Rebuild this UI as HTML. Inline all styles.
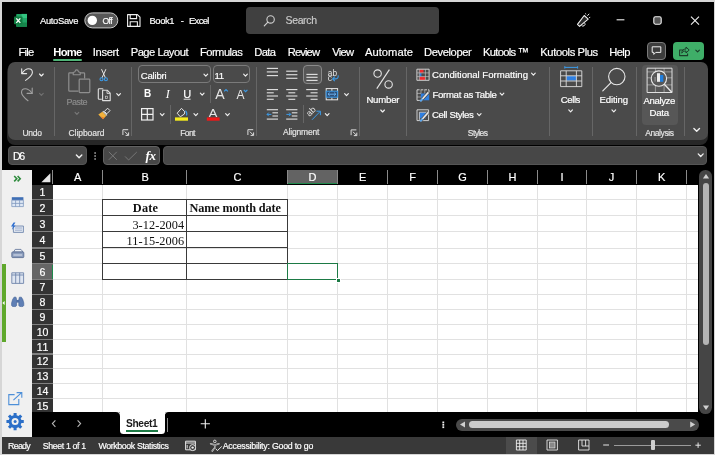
<!DOCTYPE html>
<html lang="en"><head><meta charset="utf-8"><title>Book1 - Excel</title>
<style>
html,body{margin:0;padding:0;}
body{width:715px;height:455px;overflow:hidden;background:#d6d6d6;position:relative;font-family:"Liberation Sans",sans-serif;}
#app{position:absolute;left:0;top:0;width:715px;height:455px;overflow:hidden;}
#app div{position:absolute;}
#app span{position:absolute;white-space:pre;line-height:1;-webkit-text-stroke:0.18px currentColor;}
#txt{position:absolute;left:0;top:0;width:715px;height:455px;will-change:transform;transform:translateZ(0);}
#app svg{position:absolute;left:0;top:0;will-change:transform;transform:translateZ(0);}
</style></head><body>
<div id="app">
<div style="left:2px;top:2px;width:711.9px;height:451.6px;background:#000;"></div>
<div style="left:246.3px;top:7.2px;width:193px;height:26.4px;background:#404040;border-radius:4px;"></div>
<div style="left:7.4px;top:64px;width:700.7px;height:80.8px;background:#272727;border-radius:8px;"></div>
<div style="left:8px;top:62px;width:699.5px;height:78.4px;background:#4a4a4a;border-radius:7px;"></div>
<div style="left:641.6px;top:65.3px;width:36px;height:59.3px;background:#575757;border-radius:4px;"></div>
<div style="left:138.3px;top:65.4px;width:72.3px;height:18.1px;background:transparent;border:1px solid #7a7a7a;border-radius:4px;box-sizing:border-box;"></div>
<div style="left:212.5px;top:65.4px;width:37.5px;height:18.1px;background:transparent;border:1px solid #7a7a7a;border-radius:4px;box-sizing:border-box;"></div>
<div style="left:302.8px;top:65.4px;width:18.8px;height:18.4px;background:#565656;border:1px solid #8a8a8a;border-radius:4px;box-sizing:border-box;"></div>
<div style="left:53.9px;top:67px;width:1px;height:68.5px;background:#666;"></div>
<div style="left:131px;top:67px;width:1px;height:68.5px;background:#666;"></div>
<div style="left:256px;top:67px;width:1px;height:68.5px;background:#666;"></div>
<div style="left:359.1px;top:67px;width:1px;height:68.5px;background:#666;"></div>
<div style="left:406.2px;top:67px;width:1px;height:68.5px;background:#666;"></div>
<div style="left:549.1px;top:67px;width:1px;height:68.5px;background:#666;"></div>
<div style="left:592.1px;top:67px;width:1px;height:68.5px;background:#666;"></div>
<div style="left:635.5px;top:67px;width:1px;height:68.5px;background:#666;"></div>
<div style="left:683.5px;top:67px;width:1px;height:68.5px;background:#666;"></div>
<div style="left:210.1px;top:85.4px;width:1px;height:17.6px;background:#666;"></div>
<div style="left:169.9px;top:105px;width:1px;height:18.6px;background:#666;"></div>
<div style="left:302.5px;top:105.4px;width:1px;height:17.9px;background:#666;"></div>
<div style="left:646.6px;top:41.5px;width:19.7px;height:18.8px;background:#3d3d3d;border:1px solid #7a7a7a;border-radius:4px;box-sizing:border-box;"></div>
<div style="left:673px;top:41.5px;width:31.3px;height:18.8px;background:#3fae68;border-radius:4px;"></div>
<div style="left:53.2px;top:59px;width:29px;height:2px;background:#4fb477;border-radius:1px;"></div>
<div style="left:8px;top:146.2px;width:79px;height:18.6px;background:#474747;border:1px solid #555;border-radius:4px;box-sizing:border-box;"></div>
<div style="left:103px;top:146.2px;width:57px;height:18.6px;background:#474747;border:1px solid #626262;border-radius:4px;box-sizing:border-box;"></div>
<div style="left:163.2px;top:146.2px;width:544.3px;height:18.6px;background:#474747;border:1px solid #555;border-radius:4px;box-sizing:border-box;"></div>
<div style="left:2px;top:170px;width:29.6px;height:267px;background:#f0f0f0;"></div>
<div style="left:2px;top:263.6px;width:3.6px;height:78px;background:#5fa82c;"></div>
<div style="left:53px;top:185px;width:645.4px;height:227.4px;background:#fff;"></div>
<div style="left:32.4px;top:185px;width:20.2px;height:227.4px;background:#808080;"></div>
<div style="left:32.4px;top:185.2px;width:20.2px;height:13.8px;background:#333;"></div>
<div style="left:32.4px;top:200px;width:20.2px;height:15.2px;background:#333;"></div>
<div style="left:32.4px;top:216.2px;width:20.2px;height:15px;background:#333;"></div>
<div style="left:32.4px;top:232.2px;width:20.2px;height:15.3px;background:#333;"></div>
<div style="left:32.4px;top:248.5px;width:20.2px;height:14.8px;background:#333;"></div>
<div style="left:32.4px;top:264.3px;width:20.2px;height:14.7px;background:#666;"></div>
<div style="left:32.4px;top:280px;width:20.2px;height:13.9px;background:#333;"></div>
<div style="left:32.4px;top:294.9px;width:20.2px;height:13.9px;background:#333;"></div>
<div style="left:32.4px;top:309.8px;width:20.2px;height:13.9px;background:#333;"></div>
<div style="left:32.4px;top:324.7px;width:20.2px;height:13.9px;background:#333;"></div>
<div style="left:32.4px;top:339.6px;width:20.2px;height:13.9px;background:#333;"></div>
<div style="left:32.4px;top:354.5px;width:20.2px;height:13.9px;background:#333;"></div>
<div style="left:32.4px;top:369.4px;width:20.2px;height:13.9px;background:#333;"></div>
<div style="left:32.4px;top:384.3px;width:20.2px;height:13.9px;background:#333;"></div>
<div style="left:32.4px;top:399.2px;width:20.2px;height:13.2px;background:#333;"></div>
<div style="left:51.6px;top:264.6px;width:1.2px;height:14.4px;background:#1f8a4c;"></div>
<div style="left:287.4px;top:170.1px;width:50.2px;height:13.6px;background:#636363;"></div>
<div style="left:287.4px;top:183.3px;width:50.2px;height:1.2px;background:#1f8a4c;"></div>
<div style="left:52px;top:170.3px;width:1px;height:14px;background:#8a8a8a;"></div>
<div style="left:102px;top:170.3px;width:1px;height:14px;background:#8a8a8a;"></div>
<div style="left:186.3px;top:170.3px;width:1px;height:14px;background:#8a8a8a;"></div>
<div style="left:286.7px;top:170.3px;width:1px;height:14px;background:#8a8a8a;"></div>
<div style="left:336.7px;top:170.3px;width:1px;height:14px;background:#8a8a8a;"></div>
<div style="left:386.5px;top:170.3px;width:1px;height:14px;background:#8a8a8a;"></div>
<div style="left:436.5px;top:170.3px;width:1px;height:14px;background:#8a8a8a;"></div>
<div style="left:486.5px;top:170.3px;width:1px;height:14px;background:#8a8a8a;"></div>
<div style="left:536.5px;top:170.3px;width:1px;height:14px;background:#8a8a8a;"></div>
<div style="left:585.8px;top:170.3px;width:1px;height:14px;background:#8a8a8a;"></div>
<div style="left:635.7px;top:170.3px;width:1px;height:14px;background:#8a8a8a;"></div>
<div style="left:685.5px;top:170.3px;width:1px;height:14px;background:#8a8a8a;"></div>
<div style="left:102px;top:185px;width:1px;height:227.2px;background:#e1e1e1;"></div>
<div style="left:186.3px;top:185px;width:1px;height:227.2px;background:#e1e1e1;"></div>
<div style="left:286.7px;top:185px;width:1px;height:227.2px;background:#e1e1e1;"></div>
<div style="left:336.7px;top:185px;width:1px;height:227.2px;background:#e1e1e1;"></div>
<div style="left:386.5px;top:185px;width:1px;height:227.2px;background:#e1e1e1;"></div>
<div style="left:436.5px;top:185px;width:1px;height:227.2px;background:#e1e1e1;"></div>
<div style="left:486.5px;top:185px;width:1px;height:227.2px;background:#e1e1e1;"></div>
<div style="left:536.5px;top:185px;width:1px;height:227.2px;background:#e1e1e1;"></div>
<div style="left:585.8px;top:185px;width:1px;height:227.2px;background:#e1e1e1;"></div>
<div style="left:635.7px;top:185px;width:1px;height:227.2px;background:#e1e1e1;"></div>
<div style="left:685.5px;top:185px;width:1px;height:227.2px;background:#e1e1e1;"></div>
<div style="left:53px;top:199px;width:645.4px;height:1px;background:#e1e1e1;"></div>
<div style="left:53px;top:215.2px;width:645.4px;height:1px;background:#e1e1e1;"></div>
<div style="left:53px;top:231.2px;width:645.4px;height:1px;background:#e1e1e1;"></div>
<div style="left:53px;top:247.5px;width:645.4px;height:1px;background:#e1e1e1;"></div>
<div style="left:53px;top:263.3px;width:645.4px;height:1px;background:#e1e1e1;"></div>
<div style="left:53px;top:279px;width:645.4px;height:1px;background:#e1e1e1;"></div>
<div style="left:53px;top:293.9px;width:645.4px;height:1px;background:#e1e1e1;"></div>
<div style="left:53px;top:308.8px;width:645.4px;height:1px;background:#e1e1e1;"></div>
<div style="left:53px;top:323.7px;width:645.4px;height:1px;background:#e1e1e1;"></div>
<div style="left:53px;top:338.6px;width:645.4px;height:1px;background:#e1e1e1;"></div>
<div style="left:53px;top:353.5px;width:645.4px;height:1px;background:#e1e1e1;"></div>
<div style="left:53px;top:368.4px;width:645.4px;height:1px;background:#e1e1e1;"></div>
<div style="left:53px;top:383.3px;width:645.4px;height:1px;background:#e1e1e1;"></div>
<div style="left:53px;top:398.2px;width:645.4px;height:1px;background:#e1e1e1;"></div>
<div style="left:102px;top:199.3px;width:185.8px;height:1px;background:#3a3a3a;"></div>
<div style="left:102px;top:215.1px;width:185.8px;height:1px;background:#3a3a3a;"></div>
<div style="left:102px;top:231.1px;width:185.8px;height:1px;background:#3a3a3a;"></div>
<div style="left:102px;top:247.3px;width:185.8px;height:1px;background:#3a3a3a;"></div>
<div style="left:102px;top:263.2px;width:185.8px;height:1px;background:#3a3a3a;"></div>
<div style="left:102px;top:278.9px;width:185.8px;height:1px;background:#3a3a3a;"></div>
<div style="left:101.8px;top:199.3px;width:1px;height:80.6px;background:#3a3a3a;"></div>
<div style="left:186.3px;top:199.3px;width:1px;height:80.6px;background:#3a3a3a;"></div>
<div style="left:286.8px;top:199.3px;width:1px;height:80.6px;background:#3a3a3a;"></div>
<div style="left:286.6px;top:263px;width:51.6px;height:17px;background:transparent;border:1.9px solid #1d7a45;box-sizing:border-box;"></div>
<div style="left:335.8px;top:277.8px;width:3.4px;height:3.4px;background:#1d7a45;border:0.6px solid #fff;"></div>
<div style="left:699.4px;top:170.2px;width:12.8px;height:243.8px;background:#454545;border-radius:6.4px;"></div>
<div style="left:702.8px;top:183px;width:6.2px;height:162.3px;background:#b4b4b4;border-radius:3.1px;"></div>
<div style="left:455.9px;top:418.6px;width:243.6px;height:12px;background:#4a4a4a;border-radius:6px;"></div>
<div style="left:468.7px;top:420.9px;width:200.2px;height:6.9px;background:#cbcbcb;border-radius:3.5px;"></div>
<div style="left:2px;top:437px;width:711.9px;height:16.6px;background:#393939;"></div>
<div style="left:506px;top:437px;width:30.8px;height:16.6px;background:#4b4b4b;"></div>
<div style="left:119.8px;top:411.5px;width:45px;height:22.1px;background:#fff;border-radius:0 0 3.5px 3.5px;"></div>
<div style="left:126px;top:430.2px;width:31.9px;height:1.6px;background:#1d7a45;"></div>
<div style="left:166.9px;top:417.6px;width:1px;height:14px;background:#8a8a8a;"></div>
<div style="left:613.7px;top:444.6px;width:77.4px;height:1px;background:#9a9a9a;"></div>
<div style="left:651.2px;top:440.4px;width:3.6px;height:9.8px;background:#cfcfcf;border-radius:1px;"></div>
<svg width="715" height="455" viewBox="0 0 715 455">
<rect x="16.2" y="13.9" width="10.8" height="12.8" rx="0.8" fill="#1fa463"/>
<rect x="21.6" y="13.9" width="5.4" height="4.4" fill="#33c481"/>
<rect x="21.6" y="18.3" width="5.4" height="4.2" fill="#21a366"/>
<rect x="16.2" y="22.5" width="10.8" height="4.2" fill="#16864c"/>
<rect x="14" y="16.4" width="8.5" height="7.9" rx="0.8" fill="#107c41"/>
<path d="M16.3 18.4 L20.3 22.9 M20.3 18.4 L16.3 22.9" stroke="#fff" stroke-width="1.4"/>
<rect x="84.8" y="12.9" width="33" height="15" rx="7.5" fill="#575757" stroke="#c8c8c8" stroke-width="1"/>
<circle cx="92.3" cy="20.4" r="4.7" fill="#fff"/>
<path d="M127.6 14.6 H137.4 L140 17.2 V26.4 H127.6 Z" fill="none" stroke="#f0f0f0" stroke-width="1.1" stroke-linejoin="round"/>
<path d="M130.2 14.6 V18.6 H136.6 V14.6 M130.2 26.4 V21.8 H137.4 V26.4" fill="none" stroke="#f0f0f0" stroke-width="1.1"/>
<circle cx="270.6" cy="19.4" r="3.7" fill="none" stroke="#d0d0d0" stroke-width="1.1"/>
<path d="M267.9 22.1 L264.3 25.8" stroke="#d0d0d0" stroke-width="1.2" stroke-linecap="round"/>
<path d="M577.5 24.3 L584.2 15.5 L588.2 19.2 L579.6 26.4 Z" fill="#2a2a2a" stroke="#f0f0f0" stroke-width="1.1" stroke-linejoin="round"/>
<path d="M581.4 25 A1.7 1.7 0 0 0 584.8 23.2" fill="none" stroke="#f0f0f0" stroke-width="1"/>
<path d="M587.4 15.8 L589.2 13.8 M585.9 14.4 L585.5 13.4 M589.2 17.6 L590.2 17.3" fill="none" stroke="#f0f0f0" stroke-width="1"/>
<path d="M616.6 19.8 H624.4" stroke="#f0f0f0" stroke-width="1.1"/>
<rect x="653.8" y="16.8" width="7.4" height="7.4" rx="1.6" fill="#555" stroke="#f0f0f0" stroke-width="1.1"/>
<path d="M691 16.7 L699 24.7 M699 16.7 L691 24.7" stroke="#f0f0f0" stroke-width="1.1"/>
<path d="M652.2 46.8 H660.8 V52.4 H655.8 L653.8 54.4 V52.4 H652.2 Z" fill="none" stroke="#f0f0f0" stroke-width="1" stroke-linejoin="round"/>
<path d="M683.4 50 H679.6 V55.6 H687.6 V53.4" fill="none" stroke="#1c3d2a" stroke-width="1.1" stroke-linejoin="round"/>
<path d="M681.8 53.2 C681.8 50.4 683.4 49 686 49 V47 L689.2 50 L686 53 V51 C684 51 682.8 51.6 681.8 53.2 Z" fill="none" stroke="#1c3d2a" stroke-width="1" stroke-linejoin="round"/>
<path d="M695.8 50.05 L697.6 51.95 L699.4 50.05" fill="none" stroke="#1c3d2a" stroke-width="1.1" stroke-linecap="round" stroke-linejoin="round"/>
<path d="M21.7 68.8 V73.6 H26.6" fill="none" stroke="#e6e6e6" stroke-width="1.1" stroke-linejoin="round" stroke-linecap="round"/>
<path d="M21.9 73.4 C24 70.5 26 68.7 28.5 68.7 C31 68.7 32.4 70.4 32.4 72.4 C32.4 75.2 29.5 77.5 25.6 80.4" fill="none" stroke="#e6e6e6" stroke-width="1.1" stroke-linecap="round"/>
<path d="M39.55 74 L41.4 76 L43.25 74" fill="none" stroke="#f0f0f0" stroke-width="1.15" stroke-linecap="round" stroke-linejoin="round"/>
<path d="M32.2 88.1 V93.4 H27.1" fill="none" stroke="#a0a0a0" stroke-width="1.1" stroke-linejoin="round" stroke-linecap="round"/>
<path d="M32 93.2 C30 90.4 27.8 88.8 25.2 88.8 C22.8 88.8 21.5 90.5 21.5 92.5 C21.5 95.4 24.3 97.8 28 100.7" fill="none" stroke="#a0a0a0" stroke-width="1.1" stroke-linecap="round"/>
<path d="M39.55 93.4 L41.4 95.4 L43.25 93.4" fill="none" stroke="#707070" stroke-width="1.15" stroke-linecap="round" stroke-linejoin="round"/>
<path d="M73.4 72.8 H69.6 Q68.8 72.8 68.8 73.6 V90.4 Q68.8 91.2 69.6 91.2 H78.4" fill="none" stroke="#8f8f8f" stroke-width="1.2" stroke-linejoin="round"/>
<path d="M80 72.8 H83.8 Q84.6 72.8 84.6 73.6 V78.6" fill="none" stroke="#8f8f8f" stroke-width="1.2" stroke-linejoin="round"/>
<path d="M73.2 74.8 V72.4 L75 71.8 C75.2 69.2 78.2 69.2 78.4 71.8 L80.2 72.4 V74.8 Z" fill="none" stroke="#8f8f8f" stroke-width="1.1" stroke-linejoin="round"/>
<rect x="79.2" y="79.2" width="10.6" height="13.4" rx="0.8" fill="#4a4a4a" stroke="#8f8f8f" stroke-width="1.2"/>
<path d="M75.05 112.4 L76.9 114.4 L78.75 112.4" fill="none" stroke="#777" stroke-width="1.15" stroke-linecap="round" stroke-linejoin="round"/>
<path d="M101.5 69.2 L105.4 77.8 M105.9 69.2 L102 77.8" stroke="#e6e6e6" stroke-width="1"/>
<circle cx="101.5" cy="79.3" r="1.5" fill="none" stroke="#3b9be8" stroke-width="1.1"/>
<circle cx="105.9" cy="79.3" r="1.5" fill="none" stroke="#3b9be8" stroke-width="1.1"/>
<path d="M101.8 99.2 H99.1 Q98.3 99.2 98.3 98.4 V89.6 Q98.3 88.8 99.1 88.8 H102.2 Q103 88.8 103 89.6" fill="none" stroke="#e0e0e0" stroke-width="1.1" stroke-linejoin="round"/>
<path d="M102.6 90.2 H107.2 L110.2 93.2 V100.6 H102.6 Z" fill="#4a4a4a" stroke="#e0e0e0" stroke-width="1.1" stroke-linejoin="round"/>
<path d="M107 90.4 V93.4 H110" fill="none" stroke="#e0e0e0" stroke-width="0.9"/>
<rect x="105.4" y="96.2" width="2.2" height="2.2" fill="none" stroke="#c8c8c8" stroke-width="0.7"/>
<path d="M116.75 93.7 L118.6 95.7 L120.45 93.7" fill="none" stroke="#f0f0f0" stroke-width="1.15" stroke-linecap="round" stroke-linejoin="round"/>
<path d="M107.6 108.2 L110 110.6 L106.8 113.8 L104.4 111.4 Z" fill="none" stroke="#e6e6e6" stroke-width="1" stroke-linejoin="round"/>
<path d="M102.8 111.2 L107 115.4" stroke="#e6e6e6" stroke-width="1.1"/>
<path d="M102.4 111.8 L98.3 114.6 L103 119.3 L106.3 115.7 Z" fill="#f2b23c"/>
<path d="M100.6 116.6 L103 119.3 L104.4 117.8 Z" fill="#e8762c"/>
<path d="M128.2 129.7 H122.9 V135" fill="none" stroke="#dcdcdc" stroke-width="1"/>
<path d="M124.8 131.6 L128.4 135.2 M128.6 132.4 V135.4 H125.6" fill="none" stroke="#dcdcdc" stroke-width="1"/>
<path d="M203.95 74.2 L205.8 76.2 L207.65 74.2" fill="none" stroke="#f0f0f0" stroke-width="1.15" stroke-linecap="round" stroke-linejoin="round"/>
<path d="M243.65 74.2 L245.5 76.2 L247.35 74.2" fill="none" stroke="#f0f0f0" stroke-width="1.15" stroke-linecap="round" stroke-linejoin="round"/>
<path d="M183.7 99.2 H190.6" stroke="#e6e6e6" stroke-width="1"/>
<path d="M200.35 93.2 L202.2 95.2 L204.05 93.2" fill="none" stroke="#f0f0f0" stroke-width="1.15" stroke-linecap="round" stroke-linejoin="round"/>
<text x="215.2" y="98.6" font-family="Liberation Sans, sans-serif" font-size="14" fill="#e6e6e6" textLength="9.4" lengthAdjust="spacingAndGlyphs">A</text>
<path d="M224.2 91.4 L226 89.6 L227.8 91.4" fill="none" stroke="#3b9be8" stroke-width="1.2"/>
<text x="236.6" y="98.6" font-family="Liberation Sans, sans-serif" font-size="12" fill="#e6e6e6" textLength="8" lengthAdjust="spacingAndGlyphs">A</text>
<path d="M243.8 89.8 L245.6 91.6 L247.4 89.8" fill="none" stroke="#3b9be8" stroke-width="1.2"/>
<rect x="141.6" y="108.6" width="11.4" height="11.4" fill="none" stroke="#f0f0f0" stroke-width="1.2"/>
<path d="M147.3 108.6 V120 M141.6 114.3 H153" stroke="#f0f0f0" stroke-width="1.2"/>
<path d="M160.35 113.6 L162.2 115.6 L164.05 113.6" fill="none" stroke="#f0f0f0" stroke-width="1.15" stroke-linecap="round" stroke-linejoin="round"/>
<path d="M181.5 108.3 L184.8 111.8 L184.3 114.1 L180.3 116.8 L177.2 113.2 Z" fill="none" stroke="#e6e6e6" stroke-width="1" stroke-linejoin="round"/>
<path d="M185.4 110.6 C186.9 112 187.1 113.8 186.5 115.5" fill="none" stroke="#3b9be8" stroke-width="1.1"/>
<rect x="175" y="117.4" width="13" height="3.3" fill="#f5ec1c"/>
<path d="M193.95 113.6 L195.8 115.6 L197.65 113.6" fill="none" stroke="#f0f0f0" stroke-width="1.15" stroke-linecap="round" stroke-linejoin="round"/>
<text x="208.8" y="116.6" font-family="Liberation Sans, sans-serif" font-size="11.6" fill="#e6e6e6" textLength="8.6" lengthAdjust="spacingAndGlyphs">A</text>
<rect x="206.8" y="117.4" width="12.8" height="3.3" fill="#f01818"/>
<path d="M225.65 113.6 L227.5 115.6 L229.35 113.6" fill="none" stroke="#f0f0f0" stroke-width="1.15" stroke-linecap="round" stroke-linejoin="round"/>
<path d="M253.2 129.7 H247.9 V135" fill="none" stroke="#dcdcdc" stroke-width="1"/>
<path d="M249.8 131.6 L253.4 135.2 M253.6 132.4 V135.4 H250.6" fill="none" stroke="#dcdcdc" stroke-width="1"/>
<path d="M266.8 68.4 H278" stroke="#dcdcdc" stroke-width="1.15"/>
<path d="M266.8 71.9 H278" stroke="#dcdcdc" stroke-width="1.15"/>
<path d="M266.8 75.6 H278" stroke="#dcdcdc" stroke-width="1.15"/>
<path d="M286.2 71.2 H297.4" stroke="#dcdcdc" stroke-width="1.15"/>
<path d="M286.2 74.7 H297.4" stroke="#dcdcdc" stroke-width="1.15"/>
<path d="M286.2 78.3 H297.4" stroke="#dcdcdc" stroke-width="1.15"/>
<path d="M306.4 74.4 H317.6" stroke="#dcdcdc" stroke-width="1.15"/>
<path d="M306.4 77.3 H317.6" stroke="#dcdcdc" stroke-width="1.15"/>
<path d="M306.4 80.4 H317.6" stroke="#dcdcdc" stroke-width="1.15"/>
<path d="M266.8 89.6 H278" stroke="#dcdcdc" stroke-width="1.15"/>
<path d="M266.8 92.8 H273.744" stroke="#dcdcdc" stroke-width="1.15"/>
<path d="M266.8 96 H278" stroke="#dcdcdc" stroke-width="1.15"/>
<path d="M266.8 99.3 H273.744" stroke="#dcdcdc" stroke-width="1.15"/>
<path d="M286.2 89.6 H297.4" stroke="#dcdcdc" stroke-width="1.15"/>
<path d="M288.328 92.8 H295.272" stroke="#dcdcdc" stroke-width="1.15"/>
<path d="M286.2 96 H297.4" stroke="#dcdcdc" stroke-width="1.15"/>
<path d="M288.328 99.3 H295.272" stroke="#dcdcdc" stroke-width="1.15"/>
<path d="M306.2 89.6 H317.6" stroke="#dcdcdc" stroke-width="1.15"/>
<path d="M310.532 92.8 H317.6" stroke="#dcdcdc" stroke-width="1.15"/>
<path d="M306.2 96 H317.6" stroke="#dcdcdc" stroke-width="1.15"/>
<path d="M310.532 99.3 H317.6" stroke="#dcdcdc" stroke-width="1.15"/>
<text x="327.8" y="76" font-family="Liberation Sans, sans-serif" font-size="8.6" fill="#e6e6e6" textLength="9.2" lengthAdjust="spacingAndGlyphs">ab</text>
<text x="327.8" y="81.2" font-family="Liberation Sans, sans-serif" font-size="8.6" fill="#e6e6e6">c</text>
<path d="M338.2 75.4 C338.6 78 337.2 78.9 335.2 78.9 H332.8 M334.8 76.7 L332.6 78.9 L334.8 81.1" fill="none" stroke="#3b9be8" stroke-width="1.1"/>
<rect x="326.2" y="88.6" width="11.4" height="11.2" fill="none" stroke="#e6e6e6" stroke-width="1"/>
<path d="M331.9 88.6 V91 M331.9 97.4 V99.8" stroke="#e6e6e6" stroke-width="1"/>
<rect x="326.2" y="91.2" width="11.4" height="6" fill="#2d4f78" stroke="#3b9be8" stroke-width="1"/>
<path d="M328 94.2 H335.8 M329.6 92.7 L328 94.2 L329.6 95.7 M334.2 92.7 L335.8 94.2 L334.2 95.7" fill="none" stroke="#6db6f5" stroke-width="0.9"/>
<path d="M344.65 93.6 L346.5 95.6 L348.35 93.6" fill="none" stroke="#f0f0f0" stroke-width="1.15" stroke-linecap="round" stroke-linejoin="round"/>
<path d="M266.8 109.7 H278" stroke="#dcdcdc" stroke-width="1.15"/>
<path d="M266.8 119.1 H278" stroke="#dcdcdc" stroke-width="1.15"/>
<path d="M272.4 112.8 H278" stroke="#dcdcdc" stroke-width="1.15"/>
<path d="M272.4 116 H278" stroke="#dcdcdc" stroke-width="1.15"/>
<path d="M267 114.4 H271.4 M268.8 112.6 L267 114.4 L268.8 116.2" fill="none" stroke="#3b9be8" stroke-width="1"/>
<path d="M286.2 109.7 H297.4" stroke="#dcdcdc" stroke-width="1.15"/>
<path d="M286.2 119.1 H297.4" stroke="#dcdcdc" stroke-width="1.15"/>
<path d="M291.8 112.8 H297.4" stroke="#dcdcdc" stroke-width="1.15"/>
<path d="M291.8 116 H297.4" stroke="#dcdcdc" stroke-width="1.15"/>
<path d="M286.4 114.4 H290.8 M289 112.6 L290.8 114.4 L289 116.2" fill="none" stroke="#3b9be8" stroke-width="1"/>
<text transform="translate(309.6,117) rotate(-45)" font-family="Liberation Sans, sans-serif" font-size="8.8" fill="#e6e6e6">ab</text>
<path d="M312 119.8 L320 111.6 M316.4 111.2 H320.4 V115.2" fill="none" stroke="#3b9be8" stroke-width="1"/>
<path d="M325.35 113.6 L327.2 115.6 L329.05 113.6" fill="none" stroke="#f0f0f0" stroke-width="1.15" stroke-linecap="round" stroke-linejoin="round"/>
<path d="M356.4 129.9 H351.1 V135.2" fill="none" stroke="#dcdcdc" stroke-width="1"/>
<path d="M353 131.8 L356.6 135.4 M356.8 132.6 V135.6 H353.8" fill="none" stroke="#dcdcdc" stroke-width="1"/>
<circle cx="377.6" cy="73.6" r="3.7" fill="none" stroke="#e6e6e6" stroke-width="1.1"/>
<circle cx="388.6" cy="84.4" r="3.7" fill="none" stroke="#e6e6e6" stroke-width="1.1"/>
<path d="M389.4 69.6 L376.8 88.6" stroke="#e6e6e6" stroke-width="1.1"/>
<path d="M380.75 110 L382.6 112 L384.45 110" fill="none" stroke="#f0f0f0" stroke-width="1.15" stroke-linecap="round" stroke-linejoin="round"/>
<rect x="419.5" y="69.6" width="4" height="3.2" fill="#ee2a2e"/>
<rect x="419.5" y="73.1" width="1.9" height="3.3" fill="#2f7fe0"/>
<rect x="419.5" y="76.8" width="5.7" height="3.2" fill="#ee2a2e"/>
<path d="M416.9 69.2 H429.1 V80.3 H416.9 Z" fill="none" stroke="#e0e0e0" stroke-width="0.9"/>
<path d="M416.9 72.9 H429.1 M416.9 76.6 H429.1 M419.3 69.2 V80.3 M425.4 69.2 V80.3" fill="none" stroke="#bdbdbd" stroke-width="0.7"/>
<path d="M531.55 73.2 L533.4 75.2 L535.25 73.2" fill="none" stroke="#f0f0f0" stroke-width="1.15" stroke-linecap="round" stroke-linejoin="round"/>
<rect x="420.8" y="93.5" width="8.4" height="6.8" fill="#2f7fe0"/>
<path d="M417 89.8 V100.4 H421" fill="none" stroke="#dcdcdc" stroke-width="0.9"/>
<path d="M417 89.8 H429 M429 89.8 V93" fill="none" stroke="#dcdcdc" stroke-width="0.9" stroke-dasharray="2.6 1.1"/>
<path d="M417 93.4 H421 M417 97 H421 M421 89.8 V93.4 M424.8 89.8 V93.4" fill="none" stroke="#bdbdbd" stroke-width="0.7"/>
<path d="M420.6 101 L428.4 92.4" stroke="#4a4a4a" stroke-width="3"/>
<path d="M420.6 101 L428.4 92.4" stroke="#e6e6e6" stroke-width="1.6"/>
<path d="M420.2 101.4 L422.6 98.8" stroke="#59a7f0" stroke-width="1.8"/>
<path d="M500.15 93.2 L502 95.2 L503.85 93.2" fill="none" stroke="#f0f0f0" stroke-width="1.15" stroke-linecap="round" stroke-linejoin="round"/>
<rect x="419.6" y="112.4" width="6.4" height="6" fill="#2f7fe0"/>
<path d="M417 109.8 H428.6 V120.6 H417 Z" fill="none" stroke="#dcdcdc" stroke-width="0.9"/>
<path d="M419.4 120.6 V112.2 H428.6" fill="none" stroke="#dcdcdc" stroke-width="0.8"/>
<path d="M420.6 121 L428.4 112.4" stroke="#4a4a4a" stroke-width="3"/>
<path d="M420.6 121 L428.4 112.4" stroke="#e6e6e6" stroke-width="1.6"/>
<path d="M420.2 121.4 L422.6 118.8" stroke="#59a7f0" stroke-width="1.8"/>
<path d="M477.35 113.6 L479.2 115.6 L481.05 113.6" fill="none" stroke="#f0f0f0" stroke-width="1.15" stroke-linecap="round" stroke-linejoin="round"/>
<path d="M564.8 67.4 H577.6 M564.8 66.2 V68.6 M577.6 66.2 V68.6" stroke="#3b9be8" stroke-width="1"/>
<rect x="566.4" y="76" width="10" height="4.6" fill="#2f7fe0"/>
<path d="M560.6 70.8 H581.8 V86.6 H560.6 Z M560.6 75.8 H581.8 M560.6 81 H581.8 M566.2 70.8 V86.6 M576.4 70.8 V86.6" fill="none" stroke="#dcdcdc" stroke-width="0.9"/>
<path d="M568.75 109.8 L570.6 111.8 L572.45 109.8" fill="none" stroke="#f0f0f0" stroke-width="1.15" stroke-linecap="round" stroke-linejoin="round"/>
<circle cx="616.8" cy="76.6" r="8.2" fill="none" stroke="#e6e6e6" stroke-width="1.1"/>
<path d="M611 82.6 L602.8 90.8" stroke="#e6e6e6" stroke-width="1.2" stroke-linecap="round"/>
<path d="M611.95 109.8 L613.8 111.8 L615.65 109.8" fill="none" stroke="#f0f0f0" stroke-width="1.15" stroke-linecap="round" stroke-linejoin="round"/>
<path d="M647.1 71.9 H672 M647.1 77.8 H672 M647.1 84.9 H672 M655.4 68.2 V92.5 M664.1 68.2 V92.5" fill="none" stroke="#a8a8a8" stroke-width="0.8"/>
<path d="M647.1 68.2 H672 V92.5 H647.1 Z" fill="none" stroke="#e0e0e0" stroke-width="1"/>
<circle cx="658.9" cy="78.6" r="7.7" fill="#575757" stroke="#e8e8e8" stroke-width="1.1"/>
<rect x="654.4" y="77" width="1.4" height="4.6" fill="#8a8a8a"/>
<rect x="657" y="73.2" width="3.1" height="8.6" fill="#ececec"/>
<rect x="660.1" y="75" width="3.2" height="6.8" fill="#1f7fe0"/>
<path d="M664.3 84.2 L672 92.5" stroke="#e8e8e8" stroke-width="1.3"/>
<path d="M693.9 128.4 L696.7 131.2 L699.5 128.4" fill="none" stroke="#f0f0f0" stroke-width="1.4" stroke-linecap="round" stroke-linejoin="round"/>
<path d="M76.4 155 L79.1 157.8 L81.8 155" fill="none" stroke="#f0f0f0" stroke-width="1.4" stroke-linecap="round" stroke-linejoin="round"/>
<rect x="94.4" y="152.3" width="1.4" height="1.4" fill="#c8c8c8"/>
<rect x="94.4" y="155.3" width="1.4" height="1.4" fill="#c8c8c8"/>
<rect x="94.4" y="158.3" width="1.4" height="1.4" fill="#c8c8c8"/>
<path d="M108.8 151.8 L116.8 159.8 M116.8 151.8 L108.8 159.8" stroke="#777" stroke-width="1"/>
<path d="M125 156.4 L128.6 160 L136.8 152" fill="none" stroke="#777" stroke-width="1"/>
<path d="M698.2 153.9 L700.7 156.5 L703.2 153.9" fill="none" stroke="#f0f0f0" stroke-width="1.3" stroke-linecap="round" stroke-linejoin="round"/>
<path d="M50.4 173.2 V182.2 H41.4 Z" fill="#e6e6e6"/>
<path d="M702.9 178.6 L706 174 L709.1 178.6 Z" fill="#d0d0d0"/>
<path d="M702.9 405.4 L706 410 L709.1 405.4 Z" fill="#d0d0d0"/>
<path d="M465 421.4 L460 424.4 L465 427.4 Z" fill="#d0d0d0"/>
<path d="M690.2 421.4 L695.2 424.4 L690.2 427.4 Z" fill="#d0d0d0"/>
<rect x="442.4" y="421.5" width="1.8" height="1.8" fill="#f0f0f0"/>
<rect x="442.4" y="423.9" width="1.8" height="1.8" fill="#f0f0f0"/>
<rect x="442.4" y="426.3" width="1.8" height="1.8" fill="#f0f0f0"/>
<path d="M55.4 420.4 L52.4 423.6 L55.4 426.8" fill="none" stroke="#b8b8b8" stroke-width="1.1"/>
<path d="M77.6 420.4 L80.6 423.6 L77.6 426.8" fill="none" stroke="#b8b8b8" stroke-width="1.1"/>
<path d="M200.7 423.8 H209.9 M205.3 419.2 V428.4" stroke="#f0f0f0" stroke-width="1.1"/>
<path d="M115.8 412.2 H119.8 V416.2 C119.8 413.6 118.6 412.2 115.8 412.2 Z" fill="#fff"/>
<path d="M168.8 412.2 H164.8 V416.2 C164.8 413.6 166 412.2 168.8 412.2 Z" fill="#fff"/>
<path d="M185.6 441.2 H195.4 V449.8 H185.6 Z M185.6 443 H195.4" fill="none" stroke="#e6e6e6" stroke-width="1"/>
<path d="M187.2 445 V448.4" stroke="#e6e6e6" stroke-width="0.9"/>
<circle cx="192.6" cy="447.6" r="3" fill="#393939" stroke="#e6e6e6" stroke-width="1"/>
<circle cx="192.6" cy="447.6" r="1.2" fill="#f0f0f0"/>
<circle cx="214.8" cy="441.4" r="1.3" fill="none" stroke="#e6e6e6" stroke-width="0.9"/>
<path d="M210.6 443.8 L214.8 445 L219 443.8 M214.8 445 V447.6 L212.2 451" fill="none" stroke="#e6e6e6" stroke-width="1.5" stroke-linecap="round" stroke-linejoin="round"/>
<path d="M210.6 443.8 L214.8 445 L219 443.8 M214.8 445 V447.6 L212.2 451" fill="none" stroke="#393939" stroke-width="0.5" stroke-linecap="round" stroke-linejoin="round"/>
<path d="M215.6 448.6 L217.4 450.6 L221.8 446.4" fill="none" stroke="#e6e6e6" stroke-width="1"/>
<path d="M516.4 440 H526.2 V450 H516.4 Z M516.4 443.3 H526.2 M516.4 446.7 H526.2 M519.7 440 V450 M523 440 V450" fill="none" stroke="#f0f0f0" stroke-width="0.9"/>
<path d="M547 440 H557.4 V450 H547 Z" fill="none" stroke="#e6e6e6" stroke-width="0.9"/>
<rect x="549.4" y="442" width="5.6" height="6" fill="#888" stroke="#e6e6e6" stroke-width="0.7"/>
<path d="M578.6 440 H589 V450 H578.6 Z M582 440 V446 H589 M585.6 440 V446" fill="none" stroke="#e6e6e6" stroke-width="0.9"/>
<path d="M603.2 445 H609" stroke="#e6e6e6" stroke-width="1"/>
<path d="M695.4 445.2 H700.8 M698.1 442.5 V447.9" stroke="#e6e6e6" stroke-width="1"/>
<path d="M14.2 176 L16.8 178.7 L14.2 181.4 M17.6 176 L20.2 178.7 L17.6 181.4" fill="none" stroke="#2e8b3d" stroke-width="1.6"/>
<rect x="11.8" y="197.2" width="11.6" height="3" fill="#3f6fb5"/>
<path d="M11.8 200.2 H23.4 V206.6 H11.8 Z M11.8 203.4 H23.4 M15.6 200.2 V206.6 M19.6 200.2 V206.6" fill="#dfe8f5" stroke="#7f98bf" stroke-width="0.8"/>
<path d="M13.4 226 H23.4 V232.4 H13.4 Z" fill="#e4e9f2" stroke="#6f87ad" stroke-width="0.9"/>
<path d="M15 228 H22 M15 230.2 H22" stroke="#8aa0c4" stroke-width="0.8"/>
<path d="M13.6 222.6 L11 226.6 H13 L11.8 230 L15.6 225.4 H13.6 L15.4 222.6 Z" fill="#2f6fd0"/>
<path d="M13.6 252 L15.2 249.4 H21 L23 252 Z" fill="#eef1f6" stroke="#5a6f94" stroke-width="0.8"/>
<rect x="11.8" y="252" width="12" height="5.6" rx="0.8" fill="#8a9cbc" stroke="#50658c" stroke-width="0.8"/>
<path d="M13.4 255 H22.2" stroke="#e8ecf4" stroke-width="0.9"/>
<path d="M11.8 272.8 H23.6 V283.4 H11.8 Z M15.7 272.8 V283.4 M19.7 272.8 V283.4 M11.8 275 H23.6" fill="#dfe6f1" stroke="#7086ab" stroke-width="0.9"/>
<path d="M12.6 299.6 L14 297.2 H16 L16.6 299.6 V305.4 C16.6 307 11.6 307 11.6 305.4 V303 Z" fill="#5f7fb5" stroke="#3f5f95" stroke-width="0.6"/>
<path d="M22.8 299.6 L21.4 297.2 H19.4 L18.8 299.6 V305.4 C18.8 307 23.8 307 23.8 305.4 V303 Z" fill="#5f7fb5" stroke="#3f5f95" stroke-width="0.6"/>
<rect x="16.4" y="300" width="2.6" height="2.6" fill="#4f6fa5"/>
<path d="M4.6 301 L2.4 303 L4.6 305 Z" fill="#fff"/>
<path d="M14.6 394.6 H8.8 V404.6 H18.8 V399" fill="none" stroke="#4d8fd8" stroke-width="1.1"/>
<path d="M13.4 400.2 L21.6 392.6 M16.6 392.6 H21.8 V397.8" fill="none" stroke="#4d8fd8" stroke-width="1.1"/>
<path d="M23.77 420.09 L23.77 423.11 L21.42 423.12 L20.64 425.00 L22.30 426.66 L20.16 428.80 L18.50 427.14 L16.62 427.92 L16.61 430.27 L13.59 430.27 L13.58 427.92 L11.70 427.14 L10.04 428.80 L7.90 426.66 L9.56 425.00 L8.78 423.12 L6.43 423.11 L6.43 420.09 L8.78 420.08 L9.56 418.20 L7.90 416.54 L10.04 414.40 L11.70 416.06 L13.58 415.28 L13.59 412.93 L16.61 412.93 L16.62 415.28 L18.50 416.06 L20.16 414.40 L22.30 416.54 L20.64 418.20 L21.42 420.08 Z" fill="#2b6fc8"/>
<circle cx="15.1" cy="421.6" r="3.5" fill="#f0f0f0"/>
<circle cx="15.1" cy="421.6" r="1.5" fill="#2b6fc8"/>
</svg>
<section id="txt">
<span style="left:40.00px;top:16.00px;font-size:9.4px;color:#fff;letter-spacing:-0.322px;">AutoSave</span>
<span style="left:102.40px;top:17.00px;font-size:8.6px;color:#fff;letter-spacing:-0.556px;">Off</span>
<span style="left:149.40px;top:16.00px;font-size:9.4px;color:#fff;letter-spacing:-0.348px;">Book1</span>
<span style="left:180.64px;top:16.00px;font-size:9.4px;color:#fff;">-</span>
<span style="left:189.00px;top:16.00px;font-size:9.4px;color:#fff;letter-spacing:-0.634px;">Excel</span>
<span style="left:285.50px;top:15.00px;font-size:10.5px;color:#c9c9c9;letter-spacing:-0.356px;">Search</span>
<span style="left:18.50px;top:47.00px;font-size:11.2px;color:#fff;letter-spacing:-0.744px;">File</span>
<span style="left:53.30px;top:47.00px;font-size:11.2px;color:#fff;font-weight:700;-webkit-text-stroke:0;letter-spacing:-0.731px;">Home</span>
<span style="left:92.70px;top:47.00px;font-size:11.2px;color:#fff;letter-spacing:-0.317px;">Insert</span>
<span style="left:130.70px;top:47.00px;font-size:11.2px;color:#fff;letter-spacing:-0.503px;">Page Layout</span>
<span style="left:199.90px;top:47.00px;font-size:11.2px;color:#fff;letter-spacing:-0.518px;">Formulas</span>
<span style="left:254.30px;top:47.00px;font-size:11.2px;color:#fff;letter-spacing:-0.614px;">Data</span>
<span style="left:287.80px;top:47.00px;font-size:11.2px;color:#fff;letter-spacing:-0.898px;">Review</span>
<span style="left:332.20px;top:47.00px;font-size:11.2px;color:#fff;letter-spacing:-0.749px;">View</span>
<span style="left:365.00px;top:47.00px;font-size:11.2px;color:#fff;letter-spacing:0.016px;">Automate</span>
<span style="left:424.00px;top:47.00px;font-size:11.2px;color:#fff;letter-spacing:-0.400px;">Developer</span>
<span style="left:483.00px;top:47.00px;font-size:11.2px;color:#fff;letter-spacing:-0.703px;">Kutools ™</span>
<span style="left:540.30px;top:47.00px;font-size:11.2px;color:#fff;letter-spacing:-0.390px;">Kutools Plus</span>
<span style="left:609.30px;top:47.00px;font-size:11.2px;color:#fff;letter-spacing:-0.639px;">Help</span>
<span style="left:22.50px;top:129.00px;font-size:8.5px;color:#e4e4e4;letter-spacing:-0.276px;">Undo</span>
<span style="left:68.50px;top:129.00px;font-size:8.5px;color:#e4e4e4;letter-spacing:-0.061px;">Clipboard</span>
<span style="left:180.20px;top:129.00px;font-size:8.5px;color:#e4e4e4;letter-spacing:-0.572px;">Font</span>
<span style="left:283.10px;top:128.00px;font-size:8.5px;color:#e4e4e4;letter-spacing:-0.189px;">Alignment</span>
<span style="left:467.80px;top:129.00px;font-size:8.5px;color:#e4e4e4;letter-spacing:-0.591px;">Styles</span>
<span style="left:645.20px;top:129.00px;font-size:8.5px;color:#e4e4e4;letter-spacing:-0.408px;">Analysis</span>
<span style="left:66.60px;top:98.00px;font-size:9px;color:#8c8c8c;letter-spacing:-0.529px;">Paste</span>
<span style="left:140.70px;top:71.00px;font-size:9.6px;color:#fff;letter-spacing:-0.201px;">Calibri</span>
<span style="left:214.40px;top:71.00px;font-size:9.6px;color:#fff;letter-spacing:-0.169px;">11</span>
<span style="left:144.08px;top:89.00px;font-size:10px;color:#fff;font-weight:700;-webkit-text-stroke:0;">B</span>
<span style="left:165.85px;top:88.00px;font-size:12px;color:#fff;font-style:italic;font-family:'Liberation Serif', serif;-webkit-text-stroke:0;">I</span>
<span style="left:183.17px;top:89.00px;font-size:11px;color:#fff;">U</span>
<span style="left:366.40px;top:95.00px;font-size:9.6px;color:#fff;letter-spacing:-0.205px;">Number</span>
<span style="left:432.00px;top:70.00px;font-size:9.6px;color:#fff;letter-spacing:-0.025px;">Conditional Formatting</span>
<span style="left:432.40px;top:90.00px;font-size:9.6px;color:#fff;letter-spacing:-0.294px;">Format as Table</span>
<span style="left:432.00px;top:110.00px;font-size:9.6px;color:#fff;letter-spacing:-0.353px;">Cell Styles</span>
<span style="left:560.80px;top:95.00px;font-size:9.6px;color:#fff;letter-spacing:-0.432px;">Cells</span>
<span style="left:599.50px;top:95.00px;font-size:9.6px;color:#fff;letter-spacing:-0.141px;">Editing</span>
<span style="left:643.50px;top:96.00px;font-size:9.6px;color:#fff;letter-spacing:-0.390px;">Analyze</span>
<span style="left:649.40px;top:108.00px;font-size:9.6px;color:#fff;letter-spacing:-0.155px;">Data</span>
<span style="left:13.10px;top:151.00px;font-size:10.6px;color:#fff;letter-spacing:-1.447px;">D6</span>
<span style="left:145.60px;top:149.00px;font-size:13px;color:#fff;font-weight:700;-webkit-text-stroke:0;font-style:italic;font-family:'Liberation Serif', serif;-webkit-text-stroke:0;letter-spacing:-0.444px;">fx</span>
<span style="left:73.93px;top:172.00px;font-size:11px;color:#fff;">A</span>
<span style="left:141.43px;top:172.00px;font-size:11px;color:#fff;">B</span>
<span style="left:233.62px;top:172.00px;font-size:11px;color:#fff;">C</span>
<span style="left:308.62px;top:172.00px;font-size:11px;color:#fff;">D</span>
<span style="left:358.93px;top:172.00px;font-size:11px;color:#fff;">E</span>
<span style="left:409.23px;top:172.00px;font-size:11px;color:#fff;">F</span>
<span style="left:458.32px;top:172.00px;font-size:11px;color:#fff;">G</span>
<span style="left:508.62px;top:172.00px;font-size:11px;color:#fff;">H</span>
<span style="left:560.57px;top:172.00px;font-size:11px;color:#fff;">I</span>
<span style="left:608.85px;top:172.00px;font-size:11px;color:#fff;">J</span>
<span style="left:657.93px;top:172.00px;font-size:11px;color:#fff;">K</span>
<span style="left:39.55px;top:187.00px;font-size:10.6px;color:#fff;">1</span>
<span style="left:39.55px;top:203.00px;font-size:10.6px;color:#fff;">2</span>
<span style="left:39.55px;top:219.00px;font-size:10.6px;color:#fff;">3</span>
<span style="left:39.55px;top:235.00px;font-size:10.6px;color:#fff;">4</span>
<span style="left:39.55px;top:251.00px;font-size:10.6px;color:#fff;">5</span>
<span style="left:39.55px;top:267.00px;font-size:10.6px;color:#fff;">6</span>
<span style="left:39.55px;top:282.00px;font-size:10.6px;color:#fff;">7</span>
<span style="left:39.55px;top:297.00px;font-size:10.6px;color:#fff;">8</span>
<span style="left:39.55px;top:312.00px;font-size:10.6px;color:#fff;">9</span>
<span style="left:36.70px;top:327.00px;font-size:10.6px;color:#fff;letter-spacing:-0.197px;">10</span>
<span style="left:36.70px;top:342.00px;font-size:10.6px;color:#fff;letter-spacing:0.600px;">11</span>
<span style="left:36.70px;top:356.00px;font-size:10.6px;color:#fff;letter-spacing:-0.197px;">12</span>
<span style="left:36.70px;top:371.00px;font-size:10.6px;color:#fff;letter-spacing:-0.197px;">13</span>
<span style="left:36.70px;top:386.00px;font-size:10.6px;color:#fff;letter-spacing:-0.197px;">14</span>
<span style="left:36.70px;top:401.00px;font-size:10.6px;color:#fff;letter-spacing:-0.197px;">15</span>
<span style="left:132.80px;top:202.00px;font-size:12.3px;color:#111;font-weight:700;-webkit-text-stroke:0;font-family:'Liberation Serif', serif;-webkit-text-stroke:0;letter-spacing:0.202px;">Date</span>
<span style="left:189.40px;top:202.00px;font-size:12.3px;color:#111;font-weight:700;-webkit-text-stroke:0;font-family:'Liberation Serif', serif;-webkit-text-stroke:0;letter-spacing:-0.142px;">Name month date</span>
<span style="left:132.40px;top:219.00px;font-size:12.3px;color:#111;font-family:'Liberation Serif', serif;-webkit-text-stroke:0;letter-spacing:0.071px;">3-12-2004</span>
<span style="left:126.50px;top:235.00px;font-size:12.3px;color:#111;font-family:'Liberation Serif', serif;-webkit-text-stroke:0;letter-spacing:0.086px;">11-15-2006</span>
<span style="left:125.90px;top:419.00px;font-size:10.2px;color:#1a1a1a;font-weight:700;-webkit-text-stroke:0;letter-spacing:-0.304px;">Sheet1</span>
<span style="left:8.10px;top:442.00px;font-size:8.8px;color:#fff;letter-spacing:-0.709px;">Ready</span>
<span style="left:42.80px;top:442.00px;font-size:8.8px;color:#fff;letter-spacing:-0.378px;">Sheet 1 of 1</span>
<span style="left:98.40px;top:442.00px;font-size:8.8px;color:#fff;letter-spacing:-0.366px;">Workbook Statistics</span>
<span style="left:222.70px;top:442.00px;font-size:8.8px;color:#fff;letter-spacing:-0.239px;">Accessibility: Good to go</span>
</section>
</div>
</body></html>
